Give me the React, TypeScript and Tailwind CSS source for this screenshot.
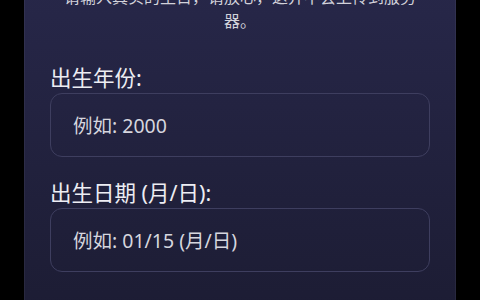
import React from 'react';

const font = { fontFamily: '"Noto Sans", "Noto Sans CJK SC", sans-serif' };

function Field({ label, placeholder }: { label: string; placeholder: string }) {
  return (
    <div className="flex flex-col">
      <label className="mb-[1px] text-[21.5px] leading-7 text-[#ededf3]">{label}</label>
      <input
        type="text"
        placeholder={placeholder}
        className="h-[64px] w-full rounded-xl border border-[#3e3e5f] bg-transparent px-[22px] text-[19.5px] text-white outline-none placeholder:text-[#d6d6de]"
      />
    </div>
  );
}

export default function App() {
  return (
    <div className="h-[300px] w-[480px] overflow-hidden bg-black" style={font}>
      <div className="mx-auto -mt-[15px] h-[340px] w-[432px] border-x border-white/5 bg-gradient-to-b from-[#272749] to-[#1c1c33] px-[25px]">
        <p className="text-center text-[16px] leading-6 text-[#d2d2da]">
          请输入真实的生日，请放心，这并不会上传到服务器。
        </p>
        <div className="mt-[31px] flex flex-col gap-[22px]">
          <Field label="出生年份:" placeholder="例如: 2000" />
          <Field label="出生日期 (月/日):" placeholder="例如: 01/15 (月/日)" />
        </div>
      </div>
    </div>
  );
}
